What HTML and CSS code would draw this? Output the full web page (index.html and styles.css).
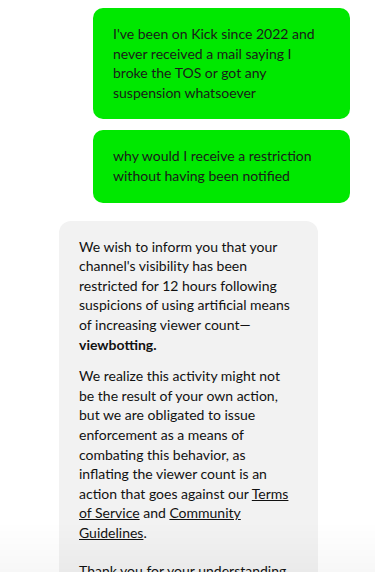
FILE: index.html
```html
<!DOCTYPE html>
<html lang="en">
<head>
<meta charset="utf-8">
<title>Chat</title>
<link rel="stylesheet" href="styles.css">
</head>
<body>
<main class="chat">
  <div class="msg msg-user">
    <p>I've been on Kick since 2022 and never received a mail saying I broke the TOS or got any suspension whatsoever</p>
  </div>
  <div class="msg msg-user">
    <p>why would I receive a restriction without having been notified</p>
  </div>
  <div class="msg msg-bot">
    <p>We wish to inform you that your channel's visibility has been restricted for 12 hours following suspicions of using artificial means of increasing viewer count—<strong>viewbotting.</strong></p>
    <p>We realize this activity might not be the result of your own action, but we are obligated to issue enforcement as a means of combating this behavior, as inflating the viewer count is an action that goes against our <a href="#">Terms of Service</a> and <a href="#">Community Guidelines</a>.</p>
    <p class="spaced">Thank you for your understanding.</p>
  </div>
</main>
<div class="fade"></div>
</body>
</html>
```

FILE: styles.css
```css
html, body {
  margin: 0;
  padding: 0;
  background: #ffffff;
}
body {
  font-family: Lato, "Noto Sans", sans-serif;
  font-size: 14px;
  line-height: 19.6px;
  color: #111111;
  overflow: hidden;
}
.chat {
  display: flex;
  flex-direction: column;
  padding: 8px 0 40px;
}
.msg p {
  margin: 0;
}
.msg-user {
  align-self: flex-end;
  box-sizing: border-box;
  width: 257px;
  margin-right: 25px;
  padding: 16px 24px 17px 20px;
  background: #00e800;
  border-radius: 10px;
  color: #1a1a1a;
}
.msg-user + .msg-user {
  margin-top: 11px;
}
.msg-bot {
  align-self: flex-start;
  box-sizing: border-box;
  width: 259px;
  margin-left: 59px;
  margin-top: 18px;
  padding: 16px 24px 17px 20px;
  background: #f2f2f2;
  border-radius: 12px;
}
.msg-bot p + p {
  margin-top: 12px;
}
.msg-bot p.spaced {
  margin-top: 19px;
}
.msg-bot strong {
  font-weight: 700;
}
.msg-bot a {
  color: inherit;
  text-decoration: underline;
}
.fade {
  position: fixed;
  left: 0;
  right: 0;
  bottom: 0;
  height: 50px;
  background: linear-gradient(to bottom, rgba(0,0,0,0), rgba(0,0,0,0.03));
  pointer-events: none;
}
```
